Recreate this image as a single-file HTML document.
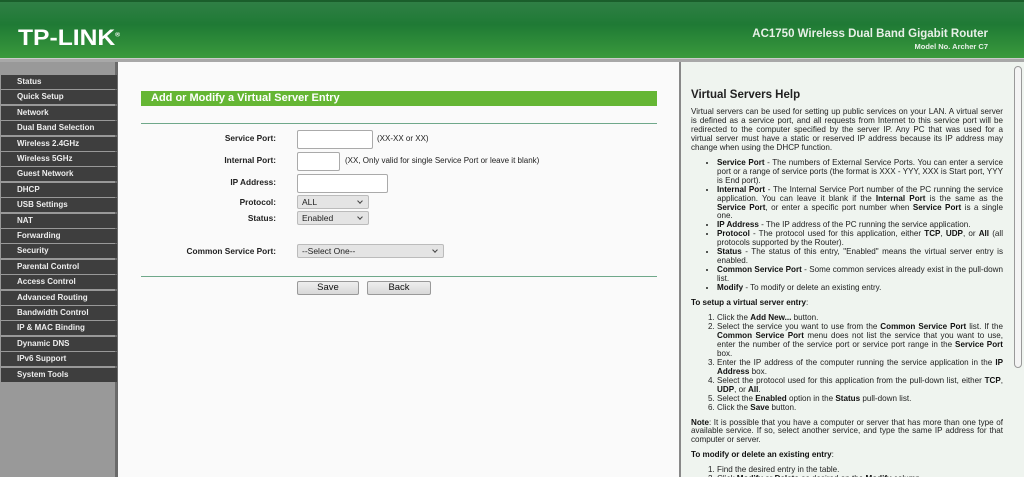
<!DOCTYPE html>
<html style="overflow:hidden;height:477px"><head><style>
*{margin:0;padding:0;box-sizing:border-box}
body{width:1024px;height:477px;overflow:hidden;font-family:"Liberation Sans",sans-serif;background:#fafafa;position:relative}
#hdr{position:absolute;left:0;top:0;width:1024px;height:58px;background:linear-gradient(180deg,#2f7f45 0%,#1f7a35 40%,#3a9a3c 100%);border-top:2px solid #1a5e2b}
#logo{position:absolute;left:18px;top:23px;color:#fff;font:bold 22px "Liberation Sans",sans-serif;transform:scaleX(1.12);transform-origin:left}
#t1{position:absolute;right:36px;top:26px;color:#e8f0e8;font:bold 11.5px "Liberation Sans",sans-serif}
#t2{position:absolute;right:36px;top:40px;color:#e8f0e8;font:bold 7.5px "Liberation Sans",sans-serif}
#line{position:absolute;left:0;top:58px;width:1024px;height:4px;background:#a8a8a8;border-top:1px solid #ccc}
#side{position:absolute;left:0;top:62px;width:118px;height:415px;background:#999;border-right:3px solid #6a6a6a}
#side div{position:absolute;left:1px;width:116px;height:14px;background:#3e3e3e;color:#eee;font:bold 8px "Liberation Sans",sans-serif;line-height:14px;padding-left:16px}
#main{position:absolute;left:121px;top:62px;width:557px;height:415px;background:#fafafa}
#bar{position:absolute;left:20px;top:29px;width:516px;height:15px;background:#65b634;color:#fff;font:bold 11px "Liberation Sans",sans-serif;line-height:15px;padding-left:10px}
.hr{position:absolute;left:20px;width:516px;height:1px;background:#6fa88a}
.lbl{position:absolute;right:402px;font:bold 8.3px "Liberation Sans",sans-serif;color:#222}
.in{position:absolute;height:19px;border:1px solid #aaa;background:#fff;border-radius:2px}
.sel{position:absolute;height:14px;border:1px solid #bbb;background:#e4e4e4;border-radius:2px;font:8.5px "Liberation Sans",sans-serif;line-height:12px;padding-left:4px;color:#222}
.sel:after{content:"";position:absolute;right:6px;top:3px;width:3px;height:3px;border-right:1px solid #444;border-bottom:1px solid #444;transform:rotate(45deg)}
.hint{position:absolute;font:8px "Liberation Sans",sans-serif;color:#222}
.btn{position:absolute;top:219px;height:14px;border:1px solid #999;background:linear-gradient(#eee,#d8d8d8);border-radius:2px;font:9.5px "Liberation Sans",sans-serif;text-align:center;line-height:12px;color:#111}
#help{position:absolute;left:679px;top:62px;width:345px;height:415px;background:#eff4ef;border-left:2px solid #888;overflow:hidden}
#hc{position:absolute;left:10px;top:27px;width:312px;font:8.1px/8.95px "Liberation Sans",sans-serif;color:#222;text-align:justify}
#hc h2{font:bold 11.5px "Liberation Sans",sans-serif;margin-bottom:7px}
#hc p{margin-bottom:6px}
#hc ul,#hc ol{margin:0 0 6px 26px}
#hc b{color:#111}
#sb{position:absolute;right:2px;top:4px;width:8px;height:302px;border:1px solid #999;border-radius:4px;background:#f4f4f4}
</style></head><body>
<div id="hdr"><div id="logo">TP-LINK<sup style="font-size:6px">®</sup></div>
<div id="t1">AC1750 Wireless Dual Band Gigabit Router</div>
<div id="t2">Model No. Archer C7</div></div>
<div id="line"></div>
<div id="side">
<div style="top:13px">Status</div><div style="top:28.4px">Quick Setup</div><div style="top:43.8px">Network</div><div style="top:59.2px">Dual Band Selection</div><div style="top:74.6px">Wireless 2.4GHz</div><div style="top:90px">Wireless 5GHz</div><div style="top:105.4px">Guest Network</div><div style="top:120.8px">DHCP</div><div style="top:136.2px">USB Settings</div><div style="top:151.6px">NAT</div><div style="top:167px">Forwarding</div><div style="top:182.4px">Security</div><div style="top:197.8px">Parental Control</div><div style="top:213.2px">Access Control</div><div style="top:228.6px">Advanced Routing</div><div style="top:244px">Bandwidth Control</div><div style="top:259.4px">IP &amp; MAC Binding</div><div style="top:274.8px">Dynamic DNS</div><div style="top:290.2px">IPv6 Support</div><div style="top:305.6px">System Tools</div>
</div>
<div id="main">
<div id="bar">Add or Modify a Virtual Server Entry</div>
<div class="hr" style="top:61px"></div>
<div class="lbl" style="top:71px">Service Port:</div><div class="in" style="left:176px;top:68px;width:76px"></div><div class="hint" style="left:256px;top:72px">(XX-XX or XX)</div>
<div class="lbl" style="top:93px">Internal Port:</div><div class="in" style="left:176px;top:90px;width:43px"></div><div class="hint" style="left:224px;top:94px">(XX, Only valid for single Service Port or leave it blank)</div>
<div class="lbl" style="top:115px">IP Address:</div><div class="in" style="left:176px;top:112px;width:91px"></div>
<div class="lbl" style="top:135px">Protocol:</div><div class="sel" style="left:176px;top:133px;width:72px">ALL</div>
<div class="lbl" style="top:151px">Status:</div><div class="sel" style="left:176px;top:149px;width:72px">Enabled</div>
<div class="lbl" style="top:184px">Common Service Port:</div><div class="sel" style="left:176px;top:182px;width:147px">--Select One--</div>
<div class="hr" style="top:214px"></div>
<div class="btn" style="left:176px;width:62px">Save</div><div class="btn" style="left:246px;width:64px">Back</div>
</div>
<div id="help"><div id="sb"></div><div id="hc">
<h2>Virtual Servers Help</h2>
<p>Virtual servers can be used for setting up public services on your LAN. A virtual server is defined as a service port, and all requests from Internet to this service port will be redirected to the computer specified by the server IP. Any PC that was used for a virtual server must have a static or reserved IP address because its IP address may change when using the DHCP function.</p>
<ul>
<li><b>Service Port</b> - The numbers of External Service Ports. You can enter a service port or a range of service ports (the format is XXX - YYY, XXX is Start port, YYY is End port).</li>
<li><b>Internal Port</b> - The Internal Service Port number of the PC running the service application. You can leave it blank if the <b>Internal Port</b> is the same as the <b>Service Port</b>, or enter a specific port number when <b>Service Port</b> is a single one.</li>
<li><b>IP Address</b> - The IP address of the PC running the service application.</li>
<li><b>Protocol</b> - The protocol used for this application, either <b>TCP</b>, <b>UDP</b>, or <b>All</b> (all protocols supported by the Router).</li>
<li><b>Status</b> - The status of this entry, "Enabled" means the virtual server entry is enabled.</li>
<li><b>Common Service Port</b> - Some common services already exist in the pull-down list.</li>
<li><b>Modify</b> - To modify or delete an existing entry.</li>
</ul>
<p><b>To setup a virtual server entry</b>:</p>
<ol>
<li>Click the <b>Add New...</b> button.</li>
<li>Select the service you want to use from the <b>Common Service Port</b> list. If the <b>Common Service Port</b> menu does not list the service that you want to use, enter the number of the service port or service port range in the <b>Service Port</b> box.</li>
<li>Enter the IP address of the computer running the service application in the <b>IP Address</b> box.</li>
<li>Select the protocol used for this application from the pull-down list, either <b>TCP</b>, <b>UDP</b>, or <b>All</b>.</li>
<li>Select the <b>Enabled</b> option in the <b>Status</b> pull-down list.</li>
<li>Click the <b>Save</b> button.</li>
</ol>
<p><b>Note</b>: It is possible that you have a computer or server that has more than one type of available service. If so, select another service, and type the same IP address for that computer or server.</p>
<p><b>To modify or delete an existing entry</b>:</p>
<ol>
<li>Find the desired entry in the table.</li>
<li>Click <b>Modify</b> or <b>Delete</b> as desired on the <b>Modify</b> column.</li>
</ol>
</div></div>
</body></html>
